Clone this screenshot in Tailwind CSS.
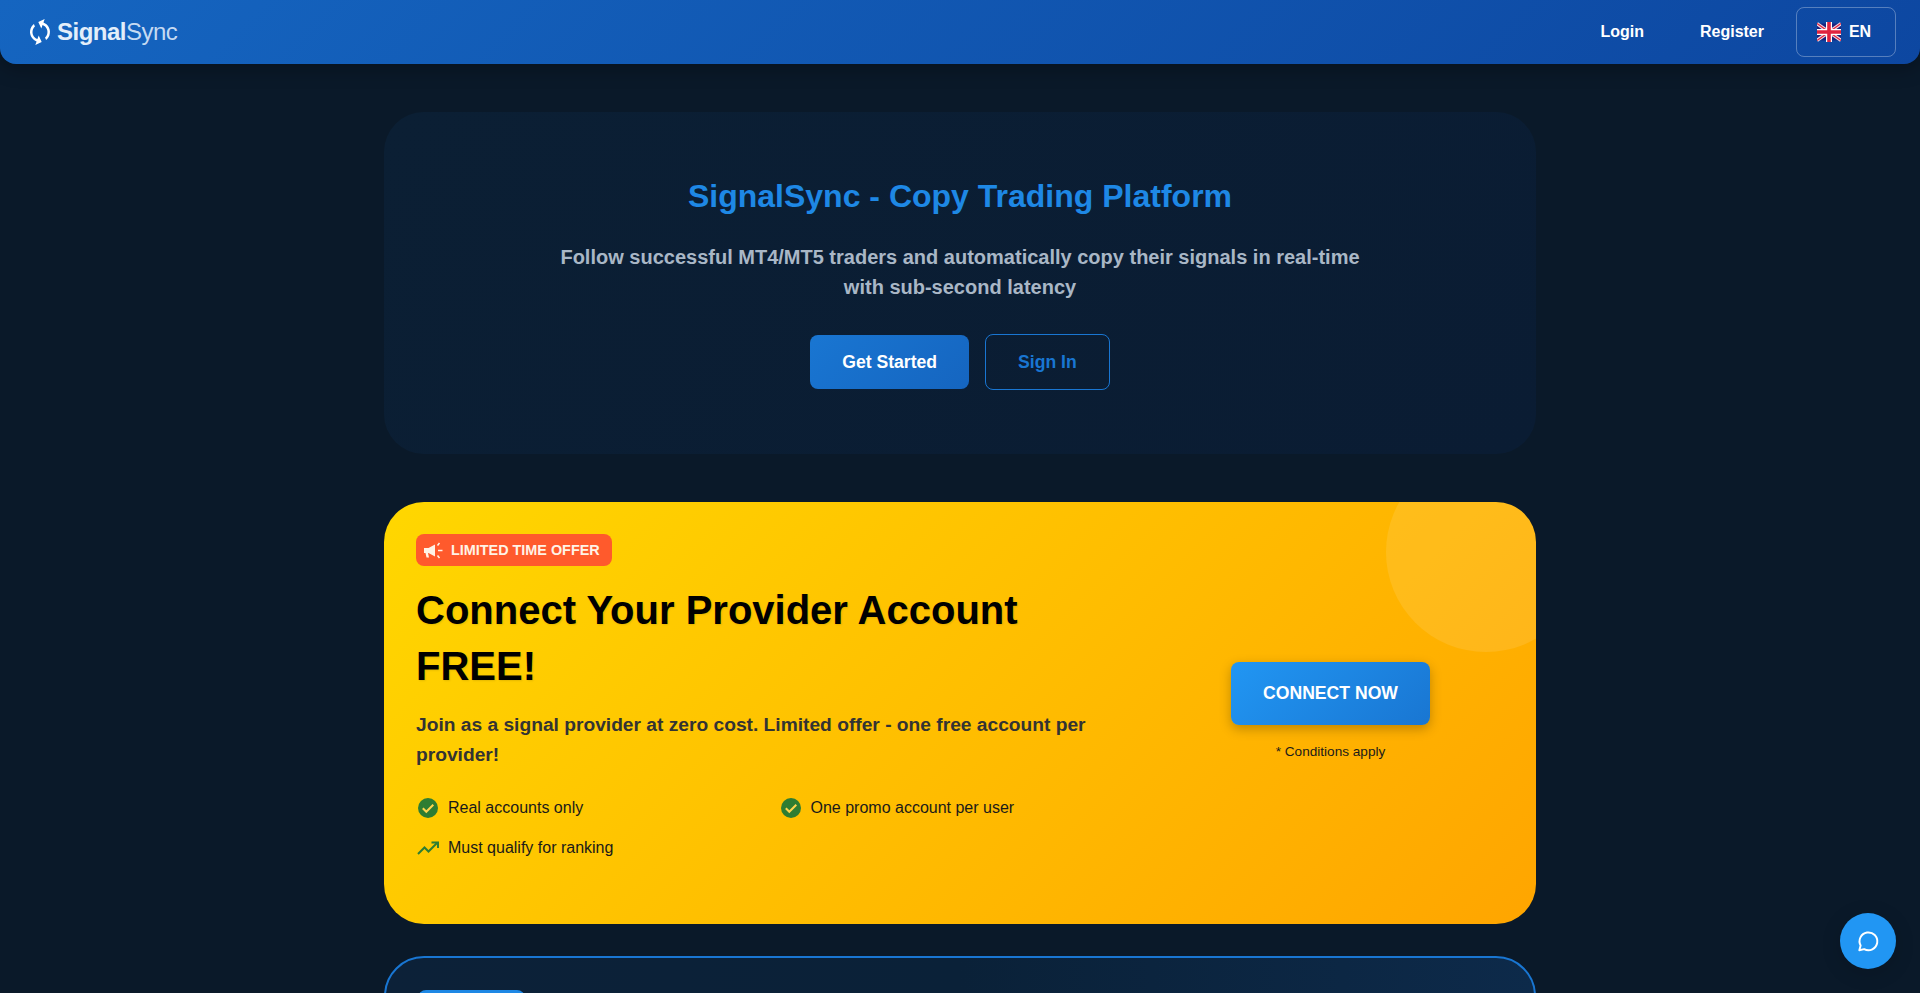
<!DOCTYPE html>
<html lang="en">
<head>
    <meta charset="UTF-8">
    <meta name="viewport" content="width=device-width, initial-scale=1.0">
    <title>SignalSync - Copy Trading Platform</title>
    <script src="https://cdn.jsdelivr.net/npm/@tailwindcss/browser@4"></script>
</head>
<body class="bg-[#0a1929] min-h-screen font-['Liberation_Sans',Arial,sans-serif] overflow-hidden h-[993px]">
    <!-- Navbar -->
    <nav class="h-16 rounded-b-2xl bg-[linear-gradient(135deg,#1565c0,#0d47a1)] shadow-[0_4px_20px_rgba(0,0,0,0.3)] flex items-center justify-between pl-[25px] pr-6">
        <div class="flex items-center gap-[2px]">
            <svg class="w-[30px] h-[30px] rotate-[20deg]" viewBox="0 0 24 24" fill="#fff">
                <path d="M12 4V1L8 5l4 4V6c3.310 0 6 2.690 6 6 0 1.010-.250 1.970-.700 2.800l1.460 1.460C19.540 15.030 20 13.570 20 12c0-4.420-3.580-8-8-8zm0 14c-3.310 0-6-2.690-6-6 0-1.010.250-1.970.700-2.800L5.240 7.740C4.460 8.970 4 10.430 4 12c0 4.420 3.580 8 8 8v3l4-4-4-4v3z"/>
            </svg>
            <span class="text-2xl tracking-[-0.5px] text-[#e3eefa] leading-none"><span class="font-bold">Signal</span><span class="font-normal text-[#c5daf2]">Sync</span></span>
        </div>
        <div class="flex items-center">
            <a class="px-4 text-white font-bold text-base">Login</a>
            <a class="px-4 ml-6 text-white font-bold text-base">Register</a>
            <button class="ml-4 w-[100px] h-[50px] rounded-lg border border-white/30 flex items-center justify-center gap-2 pr-1 text-white font-bold text-base">
                <svg class="w-6 h-5" viewBox="0 0 60 50">
                    <rect y="4" width="60" height="42" fill="#1a237e"/>
                    <path d="M0 4L60 46M60 4L0 46" stroke="#f3d9e0" stroke-width="9"/>
                    <path d="M0 4L60 46M60 4L0 46" stroke="#e0233f" stroke-width="3"/>
                    <path d="M30 0V50M0 25H60" stroke="#fff" stroke-width="15"/>
                    <path d="M30 0V50M0 25H60" stroke="#e0233f" stroke-width="9"/>
                </svg>
                EN
            </button>
        </div>
    </nav>

    <main class="w-[1152px] mx-auto pt-12">
        <!-- Hero -->
        <section class="h-[342px] rounded-[40px] bg-[linear-gradient(135deg,#0b1f34,#0a1c33)] pt-[65px] text-center">
            <h1 class="text-[32px] leading-[38px] font-bold text-[#1e88e5]">SignalSync - Copy Trading Platform</h1>
            <p class="mt-[27px] mx-auto max-w-[800px] text-xl leading-[30px] font-semibold text-[#a9b7c6]">Follow successful MT4/MT5 traders and automatically copy their signals in real-time with sub-second latency</p>
            <div class="mt-8 flex items-center justify-center gap-4">
                <a class="h-[54px] px-8 rounded-lg bg-[linear-gradient(135deg,#1976d2,#1565c0)] text-white text-[17.6px] font-bold flex items-center">Get Started</a>
                <a class="h-14 px-8 rounded-lg border border-[#1976d2] text-[#1976d2] text-[17.6px] font-bold flex items-center">Sign In</a>
            </div>
        </section>

        <!-- Promo -->
        <section class="relative overflow-hidden mt-12 h-[422px] rounded-[40px] bg-[linear-gradient(135deg,#ffd700,#ffa500)] p-8 grid grid-cols-[717px_347px] gap-6">
            <div class="absolute -top-[50px] -right-[50px] w-[200px] h-[200px] rounded-full bg-white/10"></div>
            <div>
                <div class="inline-flex items-center gap-[7px] h-8 pl-2 pr-3 pt-px rounded-lg bg-[#ff5a2c] text-[#fff3e6] text-[14.4px] font-bold">
                    <svg class="w-5 h-5" viewBox="0 0 20 20" fill="#fff3e6">
                        <path d="M0 7h4.500L11 3.500v12L4.500 12H4l1 4.500H2.500L1.500 12H0z"/>
                        <path d="M13.500 4.500l2-2.500M14 9.500h4.500M13.500 14.500l2 2.500" stroke="#fff3e6" stroke-width="1.500" fill="none"/>
                    </svg>
                    LIMITED TIME OFFER
                </div>
                <h2 class="mt-[14px] text-[40px] leading-[56px] font-bold text-black [text-shadow:1px_1px_2px_rgba(0,0,0,0.1)]">Connect Your Provider Account FREE!</h2>
                <p class="mt-4 text-[19.2px] leading-[30.72px] font-semibold text-[#333]">Join as a signal provider at zero cost. Limited offer - one free account per provider!</p>
                <ul class="mt-[25px] grid grid-cols-2 gap-x-2 gap-y-4 text-base text-[#1a1a1a]">
                    <li class="flex items-center gap-2 h-6">
                        <svg class="w-6 h-6" viewBox="0 0 24 24"><circle cx="12" cy="12" r="10" fill="#2e7d32"/><path d="M6.800 12.300l3.500 3.500 7-7" stroke="#ffd54f" stroke-width="2" fill="none"/></svg>
                        Real accounts only
                    </li>
                    <li class="flex items-center gap-2 h-6">
                        <svg class="w-6 h-6" viewBox="0 0 24 24"><circle cx="12" cy="12" r="10" fill="#2e7d32"/><path d="M6.800 12.300l3.500 3.500 7-7" stroke="#ffd54f" stroke-width="2" fill="none"/></svg>
                        One promo account per user
                    </li>
                    <li class="flex items-center gap-2 h-6">
                        <svg class="w-6 h-6" viewBox="0 0 24 24" fill="none" stroke="#2e7d32" stroke-width="2"><path d="M2 18l6.500-6.500 4 4L21 7"/><path d="M15.500 6.500H22V12" /></svg>
                        Must qualify for ranking
                    </li>
                </ul>
            </div>
            <div class="relative flex flex-col items-center pt-[128px]">
                <a class="w-[199px] h-[63px] rounded-lg bg-[linear-gradient(135deg,#2196f3,#1976d2)] text-white text-[17.6px] font-bold flex items-center justify-center pb-px shadow-[0_4px_12px_rgba(0,0,0,0.25)]">CONNECT NOW</a>
                <p class="mt-[17px] text-[13.6px] leading-5 text-[#1a1a1a]">* Conditions apply</p>
            </div>
        </section>

        <!-- Next promo card, cut off by the window -->
        <section class="mt-8 h-[300px] rounded-[40px] border-2 border-[#1976d2] bg-[linear-gradient(90deg,#0c2138,#0a2138,#0d2a4a)] p-8">
            <div class="w-[107px] h-8 rounded-lg bg-[#1e88e5]"></div>
        </section>
    </main>

    <!-- Chat -->
    <button class="fixed right-6 bottom-6 w-14 h-14 rounded-full bg-[#2196f3] shadow-[0_4px_20px_rgba(0,0,0,0.15)] flex items-center justify-center">
        <svg class="w-[26px] h-[26px]" viewBox="0 0 24 24" fill="none" stroke="#fff" stroke-width="1.800" stroke-linejoin="round"><path d="M4 20.500l1.200-4.300A8.200 8.200 0 1 1 8.500 19.500z"/></svg>
    </button>
</body>
</html>
